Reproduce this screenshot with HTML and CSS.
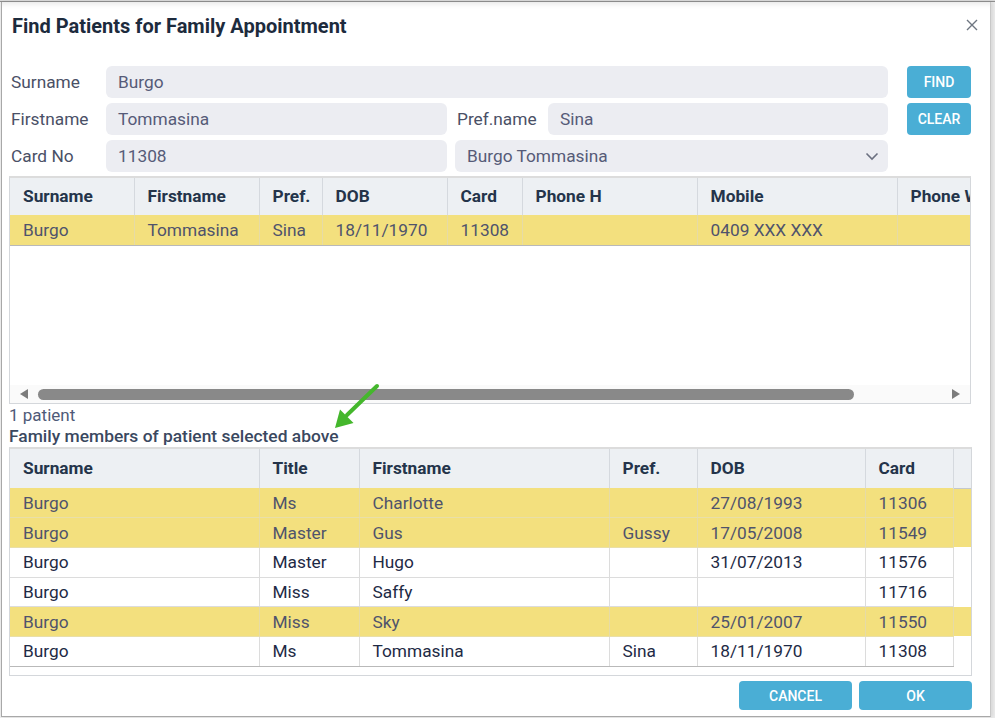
FILE: index.html
```html
<!DOCTYPE html>
<html>
<head>
<meta charset="utf-8">
<link rel="stylesheet" href="styles.css">
</head>
<body>
<div class="screen">
  <div class="topstrip"></div>
  <div class="dialog">
    <div class="titlebar">
      <h1 class="title">Find Patients for Family Appointment</h1>
      <svg class="close" width="12" height="12" viewBox="0 0 12 12"><path d="M1 1L11 11M11 1L1 11" stroke="#6e7681" stroke-width="1.4" fill="none"/></svg>
    </div>

    <div class="form">
      <div class="lbl c1">Surname</div>
      <div class="field c2to5">Burgo</div>
      <button class="btn c7">FIND</button>

      <div class="lbl c1">Firstname</div>
      <div class="field c2">Tommasina</div>
      <div class="lbl c4">Pref.name</div>
      <div class="field c5">Sina</div>
      <button class="btn c7">CLEAR</button>

      <div class="lbl c1">Card No</div>
      <div class="field c2">11308</div>
      <div class="field select c4to5">
        <span>Burgo Tommasina</span>
        <svg class="chev" width="14" height="9" viewBox="0 0 14 9"><path d="M1.5 1.5L7 7L12.5 1.5" stroke="#6b7080" stroke-width="1.6" fill="none"/></svg>
      </div>
    </div>

    <div class="grid1">
      <div class="grid1-body">
        <table class="tbl t1">
          <colgroup><col style="width:124px"><col style="width:125px"><col style="width:63px"><col style="width:125px"><col style="width:75px"><col style="width:175px"><col style="width:200px"><col style="width:120px"></colgroup>
          <thead><tr><th>Surname</th><th>Firstname</th><th>Pref.</th><th>DOB</th><th>Card</th><th>Phone H</th><th>Mobile</th><th>Phone W</th></tr></thead>
          <tbody><tr class="sel"><td>Burgo</td><td>Tommasina</td><td>Sina</td><td>18/11/1970</td><td>11308</td><td></td><td>0409 XXX XXX</td><td></td></tr></tbody>
        </table>
      </div>
      <div class="hscroll">
        <span class="arr arr-l"></span>
        <div class="track"><div class="thumb"></div></div>
        <span class="arr arr-r"></span>
      </div>
    </div>

    <div class="count">1 patient</div>
    <div class="family">Family members of patient selected above</div>

    <div class="grid2">
      <table class="tbl t2">
        <colgroup><col style="width:249px"><col style="width:100px"><col style="width:250px"><col style="width:88px"><col style="width:168px"><col style="width:88px"><col></colgroup>
        <thead><tr><th>Surname</th><th>Title</th><th>Firstname</th><th>Pref.</th><th>DOB</th><th>Card</th><th class="fill"></th></tr></thead>
        <tbody>
          <tr class="sel"><td>Burgo</td><td>Ms</td><td>Charlotte</td><td></td><td>27/08/1993</td><td>11306</td><td class="fill"></td></tr>
          <tr class="sel"><td>Burgo</td><td>Master</td><td>Gus</td><td>Gussy</td><td>17/05/2008</td><td>11549</td><td class="fill"></td></tr>
          <tr><td>Burgo</td><td>Master</td><td>Hugo</td><td></td><td>31/07/2013</td><td>11576</td><td class="fill"></td></tr>
          <tr><td>Burgo</td><td>Miss</td><td>Saffy</td><td></td><td></td><td>11716</td><td class="fill"></td></tr>
          <tr class="sel"><td>Burgo</td><td>Miss</td><td>Sky</td><td></td><td>25/01/2007</td><td>11550</td><td class="fill"></td></tr>
          <tr class="last"><td>Burgo</td><td>Ms</td><td>Tommasina</td><td>Sina</td><td>18/11/1970</td><td>11308</td><td class="fill"></td></tr>
        </tbody>
      </table>
    </div>

    <div class="actions">
      <button class="btn wide">CANCEL</button>
      <button class="btn wide">OK</button>
    </div>
  </div>

  <svg class="annot" width="995" height="718" viewBox="0 0 995 718">
    <path d="M377 386L347 415" stroke="#44b72c" stroke-width="4" stroke-linecap="round" fill="none"/>
    <path d="M335 428L340 409.5L353.5 423Z" fill="#44b72c"/>
  </svg>
</div>
</body>
</html>
```

FILE: styles.css
```css
* { box-sizing: border-box; }
html, body { margin: 0; padding: 0; }
body {
  font-family: Roboto, "Liberation Sans", Arial, sans-serif;
  background: #ebebeb;
  width: 995px;
  height: 718px;
  overflow: hidden;
}
.screen {
  position: relative;
  width: 995px;
  height: 718px;
  display: flex;
  flex-direction: column;
}
.topstrip {
  height: 2px;
  background: #d9d9d9;
  border-bottom: 1px solid #8f8f8f;
}
.dialog {
  margin-left: 1px;
  width: 990px;
  height: 715px;
  background: #fff;
  border-left: 1px solid #a8a8a8;
  border-right: 1px solid #c8c8c8;
  border-bottom: 1px solid #a8a8a8;
  box-shadow: inset 0 7px 6px -6px rgba(0,0,0,0.12), 2px 0 3px rgba(0,0,0,0.08);
  padding: 0 0 0 7px;
  display: flex;
  flex-direction: column;
}
.titlebar {
  height: 64px;
  display: flex;
  align-items: flex-start;
  justify-content: space-between;
  padding-right: 12px;
}
.title {
  margin: 12px 0 0 3px;
  font-size: 20px;
  line-height: 25px;
  font-weight: 700;
  color: #1d2b3d;
}
.close { margin-top: 17px; }

.form {
  display: grid;
  grid-template-columns: 97px 341px 8px 93px 340px 19px 64px;
  grid-auto-rows: 32px;
  row-gap: 5px;
  align-items: center;
}
.c1 { grid-column: 1; }
.c2 { grid-column: 2; }
.c4 { grid-column: 4; }
.c5 { grid-column: 5; }
.c7 { grid-column: 7; }
.c2to5 { grid-column: 2 / 6; }
.c4to5 { grid-column: 4 / 6; }
.lbl {
  padding-left: 2px;
  font-size: 17.3px;
  color: #4a5066;
}
.field {
  height: 32px;
  border-radius: 6px;
  background: #ecedf2;
  padding-left: 12px;
  font-size: 17.3px;
  line-height: 32px;
  color: #565b78;
}
.select {
  display: flex;
  justify-content: space-between;
  align-items: center;
  padding-right: 9px;
}
.btn {
  border: none;
  border-radius: 4px;
  background: #4aaed5;
  color: #fff;
  font-family: Roboto, "Liberation Sans", Arial, sans-serif;
  font-size: 14px;
  font-weight: 500;
  height: 32px;
  padding: 0;
}
.form .btn { margin-top: -1px; }

.grid1 {
  margin-top: 4px;
  width: 962px;
  height: 228px;
  border: 1px solid #d4d7db;
  border-top: 2px solid #dcdcdc;
  display: flex;
  flex-direction: column;
  overflow: hidden;
}
.grid1-body {
  flex: 1;
  overflow: hidden;
}
.tbl {
  border-collapse: collapse;
  table-layout: fixed;
  font-size: 17.3px;
}
.t1 { width: 1007px; }
.tbl th {
  height: 37px;
  background: #edf0f3;
  border-right: 1px solid #d5d9de;
  text-align: left;
  font-weight: 700;
  color: #24344a;
  padding: 0 0 1px 13px;
  white-space: nowrap;
  overflow: hidden;
}
.tbl td {
  height: 30px;
  padding: 0 0 0 13px;
  white-space: nowrap;
  overflow: hidden;
  color: #1e2a45;
  border-right: 1px solid #dcdcdc;
  border-bottom: 1px solid #dcdcdc;
}
.tbl tr.sel td {
  background: #f3e07e;
  color: #4f536c;
  border-right-color: #e6dba6;
  border-bottom-color: #e9dfa8;
}
.t1 tr.sel td { border-bottom: 1px solid #b9b9b9; }

.hscroll {
  height: 18px;
  display: flex;
  align-items: center;
  background: #fafafa;
  padding: 0 10px 0 10px;
}
.arr {
  width: 0;
  height: 0;
  border-top: 5px solid transparent;
  border-bottom: 5px solid transparent;
}
.arr-l { border-right: 8px solid #7c7c7c; }
.arr-r { border-left: 8px solid #7c7c7c; }
.track {
  flex: 1;
  padding: 0 98px 0 10px;
}
.thumb {
  height: 11px;
  border-radius: 6px;
  background: #898989;
}

.count {
  font-size: 17px;
  line-height: 22px;
  color: #4f5a78;
}
.family {
  font-size: 17.4px;
  line-height: 21px;
  font-weight: 500;
  color: #3a4860;
}

.grid2 {
  width: 963px;
  height: 229px;
  border: 1px solid #d4d7db;
  border-top: 2px solid #dcdcdc;
  overflow: hidden;
}
.t2 { width: 961px; }
.t2 th { height: 39px; }
.t2 td { height: 29.7px; }
.t2 th.fill { border-right: none; border-bottom: 1px solid #c4c8cc; }
.t2 td.fill { border-right: none; border-bottom: none; }
.t2 tr.last td { border-bottom: 1px solid #b9b9b9; }
.t2 tr.last td.fill { border-bottom: none; }

.actions {
  width: 963px;
  margin-top: 5px;
  display: flex;
  justify-content: flex-end;
  gap: 7px;
}
.btn.wide {
  width: 113px;
  height: 29px;
}

.annot {
  position: absolute;
  left: 0;
  top: 0;
  pointer-events: none;
}
```
